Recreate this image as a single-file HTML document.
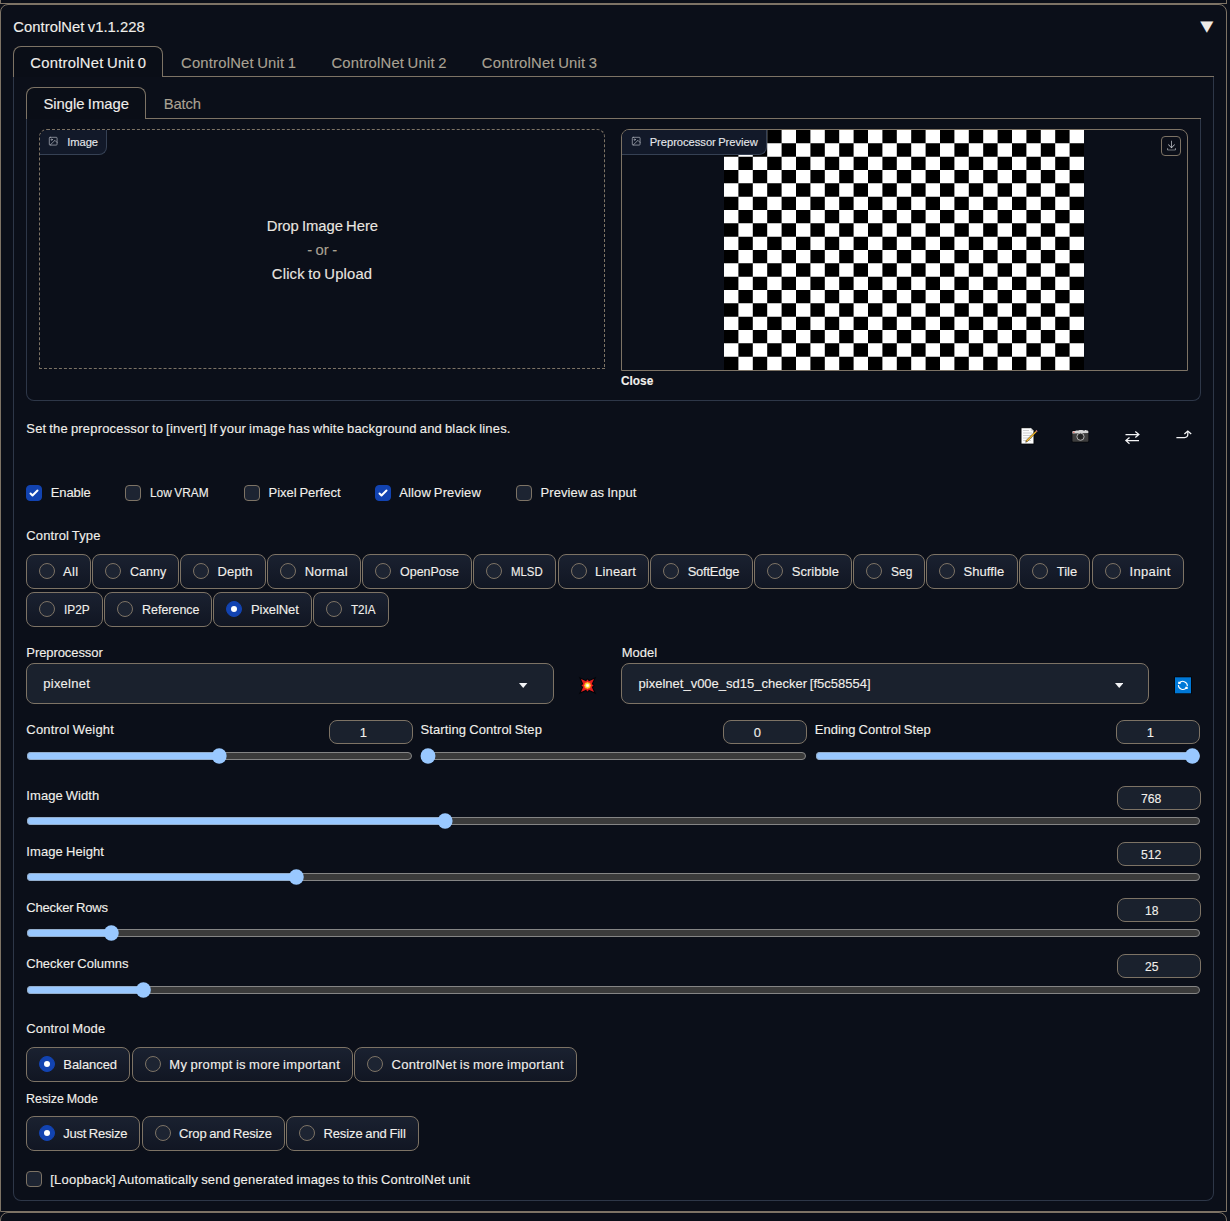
<!DOCTYPE html>
<html lang="en"><head><meta charset="utf-8"><title>ControlNet v1.1.228</title>
<style>
html,body{margin:0;padding:0}
body{width:1230px;height:1221px;overflow:hidden;background:#0b0f19;position:relative;font-family:"Liberation Sans", sans-serif;color:#f1efeb}
div,span,svg{box-sizing:border-box;position:absolute}
.blk{border:1px solid #7d7365;background:#0b0f19}
.tabitem{border:1px solid #2e3748;border-top:none;border-radius:0 0 8px 8px}
.navline{height:1px;background:#7d7365}
.tabsel{border:1px solid #7d7365;border-bottom:none;border-radius:8px 8px 0 0;background:#0a0e17}
.imgblk{border:1px solid #7d7365;border-radius:8px 8px 0 0}
.dashed{border-style:dashed}
.lbl{background:#121929;border-right:1px solid #364154;border-bottom:1px solid #364154;border-radius:7px 0 8px 0}
.dlbtn{width:20px;height:20px;border:1px solid #7d7365;border-radius:4px;background:#0b0f19}
.dlbtn svg{left:3.5px;top:3.2px}
.t{white-space:pre;line-height:20px;height:20px;word-spacing:-0.06em;-webkit-text-stroke:0.12px;transform-origin:0 50%}
.tri{font-family:"DejaVu Sans",sans-serif;font-size:17px;line-height:20px;color:#edebe8;transform:scaleY(0.86);transform-origin:50% 50%}
.cb{width:16px;height:16px;border:1px solid #7d7365;border-radius:4px;background:#1d2432}
.cb.on{background:#1243b1;border-color:#1243b1}
.cb svg{left:-1px;top:-1px}
.pill{border:1px solid #7d7365;border-radius:8px;background:linear-gradient(to top,#111623,#1a2130)}
.rd{width:16px;height:16px;border:1px solid #7d7365;border-radius:50%;background:#1d2432}
.rd.on{background:#1243b1;border-color:#1243b1}
.rd i{position:absolute;left:4px;top:4px;width:6px;height:6px;border-radius:50%;background:#fff}
.dd{border:1px solid #7d7365;border-radius:8px;background:#1a212d}
.num{height:24px;border:1px solid #7d7365;border-radius:8px;background:#1a212d}
.trk{height:8px;border:1px solid #858585;border-radius:4px;background:#3b3b3b}
.fil{height:8px;border-radius:4px 0 0 4px;background:#99c8ff;box-shadow:inset 0 0 0 1px rgba(138,132,124,.38)}
</style></head>
<body>
<div class="blk" style="left:0;top:-20px;width:1227px;height:24px;border-radius:0"></div>
<div class="blk" style="left:0;top:4px;width:1227px;height:1208px;border-radius:8px 8px 0 0"></div>
<div class="blk" style="left:0;top:1212px;width:1227px;height:40px;border-radius:8px 8px 0 0"></div>
<span class="t" id="t0" style="left:13.30px;top:16.87px;font-size:14.8px;color:#f1efeb;letter-spacing:0.041px">ControlNet v1.1.228</span>
<span class="tri" style="left:1200.2px;top:16.4px">▼</span>
<div class="tabitem" style="left:13px;top:76px;width:1201px;height:1125px"></div>
<div class="navline" style="left:13px;top:76px;width:1201px"></div>
<div class="tabsel" style="left:13px;top:46px;width:150px;height:31px"></div>
<span class="t" id="t1" style="left:30.30px;top:52.87px;font-size:14.8px;color:#f1efeb;letter-spacing:0.252px">ControlNet Unit 0</span>
<span class="t" id="t2" style="left:181.00px;top:52.87px;font-size:14.8px;color:#aaa293;letter-spacing:0.205px">ControlNet Unit 1</span>
<span class="t" id="t3" style="left:331.40px;top:52.87px;font-size:14.8px;color:#aaa293;letter-spacing:0.205px">ControlNet Unit 2</span>
<span class="t" id="t4" style="left:481.80px;top:52.87px;font-size:14.8px;color:#aaa293;letter-spacing:0.217px">ControlNet Unit 3</span>
<div class="tabitem" style="left:26px;top:118px;width:1175px;height:283px"></div>
<div class="navline" style="left:26px;top:118px;width:1175px"></div>
<div class="tabsel" style="left:26px;top:87px;width:120px;height:32px"></div>
<span class="t" id="t5" style="left:43.40px;top:93.87px;font-size:14.8px;color:#f1efeb;letter-spacing:0.010px">Single Image</span>
<span class="t" id="t6" style="left:163.80px;top:93.87px;font-size:14.8px;color:#aaa293;letter-spacing:-0.169px">Batch</span>
<div class="imgblk dashed" style="left:39px;top:129px;width:566px;height:240px"></div>
<div class="lbl" style="left:40px;top:130px;width:67px;height:25px"></div>
<svg class="ico" style="left:48px;top:136px" width="10.4" height="10.4" viewBox="0 0 24 24" fill="none" stroke="#b4b8c0" stroke-width="1.600" stroke-linecap="round" stroke-linejoin="round"><rect x="3" y="3" width="18" height="18" rx="2" ry="2"/><circle cx="8.5" cy="8.5" r="1.5"/><polyline points="21 15 16 10 5 21"/></svg>
<span class="t" id="t7" style="left:67.20px;top:132.12px;font-size:11.2px;color:#e5e7eb;letter-spacing:-0.059px">Image</span>
<span class="t" id="t8" style="left:266.80px;top:215.87px;font-size:14.8px;color:#e9e6e0;letter-spacing:-0.035px">Drop Image Here</span>
<span class="t" id="t9" style="left:307.20px;top:239.87px;font-size:14.8px;color:#aaa293;letter-spacing:0.089px">- or -</span>
<span class="t" id="t10" style="left:271.80px;top:263.87px;font-size:14.8px;color:#e9e6e0;letter-spacing:0.183px">Click to Upload</span>
<div class="imgblk" style="left:621px;top:129px;width:567px;height:242px"></div>
<svg class="ico" style="left:724px;top:130px" width="360" height="240" viewBox="0 0 360 240"><rect width="360" height="240" fill="#fff"/><path d="M14.40 0.00h14.40v13.33h-14.40zM43.20 0.00h14.40v13.33h-14.40zM72.00 0.00h14.40v13.33h-14.40zM100.80 0.00h14.40v13.33h-14.40zM129.60 0.00h14.40v13.33h-14.40zM158.40 0.00h14.40v13.33h-14.40zM187.20 0.00h14.40v13.33h-14.40zM216.00 0.00h14.40v13.33h-14.40zM244.80 0.00h14.40v13.33h-14.40zM273.60 0.00h14.40v13.33h-14.40zM302.40 0.00h14.40v13.33h-14.40zM331.20 0.00h14.40v13.33h-14.40zM0.00 13.33h14.40v13.33h-14.40zM28.80 13.33h14.40v13.33h-14.40zM57.60 13.33h14.40v13.33h-14.40zM86.40 13.33h14.40v13.33h-14.40zM115.20 13.33h14.40v13.33h-14.40zM144.00 13.33h14.40v13.33h-14.40zM172.80 13.33h14.40v13.33h-14.40zM201.60 13.33h14.40v13.33h-14.40zM230.40 13.33h14.40v13.33h-14.40zM259.20 13.33h14.40v13.33h-14.40zM288.00 13.33h14.40v13.33h-14.40zM316.80 13.33h14.40v13.33h-14.40zM345.60 13.33h14.40v13.33h-14.40zM14.40 26.67h14.40v13.33h-14.40zM43.20 26.67h14.40v13.33h-14.40zM72.00 26.67h14.40v13.33h-14.40zM100.80 26.67h14.40v13.33h-14.40zM129.60 26.67h14.40v13.33h-14.40zM158.40 26.67h14.40v13.33h-14.40zM187.20 26.67h14.40v13.33h-14.40zM216.00 26.67h14.40v13.33h-14.40zM244.80 26.67h14.40v13.33h-14.40zM273.60 26.67h14.40v13.33h-14.40zM302.40 26.67h14.40v13.33h-14.40zM331.20 26.67h14.40v13.33h-14.40zM0.00 40.00h14.40v13.33h-14.40zM28.80 40.00h14.40v13.33h-14.40zM57.60 40.00h14.40v13.33h-14.40zM86.40 40.00h14.40v13.33h-14.40zM115.20 40.00h14.40v13.33h-14.40zM144.00 40.00h14.40v13.33h-14.40zM172.80 40.00h14.40v13.33h-14.40zM201.60 40.00h14.40v13.33h-14.40zM230.40 40.00h14.40v13.33h-14.40zM259.20 40.00h14.40v13.33h-14.40zM288.00 40.00h14.40v13.33h-14.40zM316.80 40.00h14.40v13.33h-14.40zM345.60 40.00h14.40v13.33h-14.40zM14.40 53.33h14.40v13.33h-14.40zM43.20 53.33h14.40v13.33h-14.40zM72.00 53.33h14.40v13.33h-14.40zM100.80 53.33h14.40v13.33h-14.40zM129.60 53.33h14.40v13.33h-14.40zM158.40 53.33h14.40v13.33h-14.40zM187.20 53.33h14.40v13.33h-14.40zM216.00 53.33h14.40v13.33h-14.40zM244.80 53.33h14.40v13.33h-14.40zM273.60 53.33h14.40v13.33h-14.40zM302.40 53.33h14.40v13.33h-14.40zM331.20 53.33h14.40v13.33h-14.40zM0.00 66.67h14.40v13.33h-14.40zM28.80 66.67h14.40v13.33h-14.40zM57.60 66.67h14.40v13.33h-14.40zM86.40 66.67h14.40v13.33h-14.40zM115.20 66.67h14.40v13.33h-14.40zM144.00 66.67h14.40v13.33h-14.40zM172.80 66.67h14.40v13.33h-14.40zM201.60 66.67h14.40v13.33h-14.40zM230.40 66.67h14.40v13.33h-14.40zM259.20 66.67h14.40v13.33h-14.40zM288.00 66.67h14.40v13.33h-14.40zM316.80 66.67h14.40v13.33h-14.40zM345.60 66.67h14.40v13.33h-14.40zM14.40 80.00h14.40v13.33h-14.40zM43.20 80.00h14.40v13.33h-14.40zM72.00 80.00h14.40v13.33h-14.40zM100.80 80.00h14.40v13.33h-14.40zM129.60 80.00h14.40v13.33h-14.40zM158.40 80.00h14.40v13.33h-14.40zM187.20 80.00h14.40v13.33h-14.40zM216.00 80.00h14.40v13.33h-14.40zM244.80 80.00h14.40v13.33h-14.40zM273.60 80.00h14.40v13.33h-14.40zM302.40 80.00h14.40v13.33h-14.40zM331.20 80.00h14.40v13.33h-14.40zM0.00 93.33h14.40v13.33h-14.40zM28.80 93.33h14.40v13.33h-14.40zM57.60 93.33h14.40v13.33h-14.40zM86.40 93.33h14.40v13.33h-14.40zM115.20 93.33h14.40v13.33h-14.40zM144.00 93.33h14.40v13.33h-14.40zM172.80 93.33h14.40v13.33h-14.40zM201.60 93.33h14.40v13.33h-14.40zM230.40 93.33h14.40v13.33h-14.40zM259.20 93.33h14.40v13.33h-14.40zM288.00 93.33h14.40v13.33h-14.40zM316.80 93.33h14.40v13.33h-14.40zM345.60 93.33h14.40v13.33h-14.40zM14.40 106.67h14.40v13.33h-14.40zM43.20 106.67h14.40v13.33h-14.40zM72.00 106.67h14.40v13.33h-14.40zM100.80 106.67h14.40v13.33h-14.40zM129.60 106.67h14.40v13.33h-14.40zM158.40 106.67h14.40v13.33h-14.40zM187.20 106.67h14.40v13.33h-14.40zM216.00 106.67h14.40v13.33h-14.40zM244.80 106.67h14.40v13.33h-14.40zM273.60 106.67h14.40v13.33h-14.40zM302.40 106.67h14.40v13.33h-14.40zM331.20 106.67h14.40v13.33h-14.40zM0.00 120.00h14.40v13.33h-14.40zM28.80 120.00h14.40v13.33h-14.40zM57.60 120.00h14.40v13.33h-14.40zM86.40 120.00h14.40v13.33h-14.40zM115.20 120.00h14.40v13.33h-14.40zM144.00 120.00h14.40v13.33h-14.40zM172.80 120.00h14.40v13.33h-14.40zM201.60 120.00h14.40v13.33h-14.40zM230.40 120.00h14.40v13.33h-14.40zM259.20 120.00h14.40v13.33h-14.40zM288.00 120.00h14.40v13.33h-14.40zM316.80 120.00h14.40v13.33h-14.40zM345.60 120.00h14.40v13.33h-14.40zM14.40 133.33h14.40v13.33h-14.40zM43.20 133.33h14.40v13.33h-14.40zM72.00 133.33h14.40v13.33h-14.40zM100.80 133.33h14.40v13.33h-14.40zM129.60 133.33h14.40v13.33h-14.40zM158.40 133.33h14.40v13.33h-14.40zM187.20 133.33h14.40v13.33h-14.40zM216.00 133.33h14.40v13.33h-14.40zM244.80 133.33h14.40v13.33h-14.40zM273.60 133.33h14.40v13.33h-14.40zM302.40 133.33h14.40v13.33h-14.40zM331.20 133.33h14.40v13.33h-14.40zM0.00 146.67h14.40v13.33h-14.40zM28.80 146.67h14.40v13.33h-14.40zM57.60 146.67h14.40v13.33h-14.40zM86.40 146.67h14.40v13.33h-14.40zM115.20 146.67h14.40v13.33h-14.40zM144.00 146.67h14.40v13.33h-14.40zM172.80 146.67h14.40v13.33h-14.40zM201.60 146.67h14.40v13.33h-14.40zM230.40 146.67h14.40v13.33h-14.40zM259.20 146.67h14.40v13.33h-14.40zM288.00 146.67h14.40v13.33h-14.40zM316.80 146.67h14.40v13.33h-14.40zM345.60 146.67h14.40v13.33h-14.40zM14.40 160.00h14.40v13.33h-14.40zM43.20 160.00h14.40v13.33h-14.40zM72.00 160.00h14.40v13.33h-14.40zM100.80 160.00h14.40v13.33h-14.40zM129.60 160.00h14.40v13.33h-14.40zM158.40 160.00h14.40v13.33h-14.40zM187.20 160.00h14.40v13.33h-14.40zM216.00 160.00h14.40v13.33h-14.40zM244.80 160.00h14.40v13.33h-14.40zM273.60 160.00h14.40v13.33h-14.40zM302.40 160.00h14.40v13.33h-14.40zM331.20 160.00h14.40v13.33h-14.40zM0.00 173.33h14.40v13.33h-14.40zM28.80 173.33h14.40v13.33h-14.40zM57.60 173.33h14.40v13.33h-14.40zM86.40 173.33h14.40v13.33h-14.40zM115.20 173.33h14.40v13.33h-14.40zM144.00 173.33h14.40v13.33h-14.40zM172.80 173.33h14.40v13.33h-14.40zM201.60 173.33h14.40v13.33h-14.40zM230.40 173.33h14.40v13.33h-14.40zM259.20 173.33h14.40v13.33h-14.40zM288.00 173.33h14.40v13.33h-14.40zM316.80 173.33h14.40v13.33h-14.40zM345.60 173.33h14.40v13.33h-14.40zM14.40 186.67h14.40v13.33h-14.40zM43.20 186.67h14.40v13.33h-14.40zM72.00 186.67h14.40v13.33h-14.40zM100.80 186.67h14.40v13.33h-14.40zM129.60 186.67h14.40v13.33h-14.40zM158.40 186.67h14.40v13.33h-14.40zM187.20 186.67h14.40v13.33h-14.40zM216.00 186.67h14.40v13.33h-14.40zM244.80 186.67h14.40v13.33h-14.40zM273.60 186.67h14.40v13.33h-14.40zM302.40 186.67h14.40v13.33h-14.40zM331.20 186.67h14.40v13.33h-14.40zM0.00 200.00h14.40v13.33h-14.40zM28.80 200.00h14.40v13.33h-14.40zM57.60 200.00h14.40v13.33h-14.40zM86.40 200.00h14.40v13.33h-14.40zM115.20 200.00h14.40v13.33h-14.40zM144.00 200.00h14.40v13.33h-14.40zM172.80 200.00h14.40v13.33h-14.40zM201.60 200.00h14.40v13.33h-14.40zM230.40 200.00h14.40v13.33h-14.40zM259.20 200.00h14.40v13.33h-14.40zM288.00 200.00h14.40v13.33h-14.40zM316.80 200.00h14.40v13.33h-14.40zM345.60 200.00h14.40v13.33h-14.40zM14.40 213.33h14.40v13.33h-14.40zM43.20 213.33h14.40v13.33h-14.40zM72.00 213.33h14.40v13.33h-14.40zM100.80 213.33h14.40v13.33h-14.40zM129.60 213.33h14.40v13.33h-14.40zM158.40 213.33h14.40v13.33h-14.40zM187.20 213.33h14.40v13.33h-14.40zM216.00 213.33h14.40v13.33h-14.40zM244.80 213.33h14.40v13.33h-14.40zM273.60 213.33h14.40v13.33h-14.40zM302.40 213.33h14.40v13.33h-14.40zM331.20 213.33h14.40v13.33h-14.40zM0.00 226.67h14.40v13.33h-14.40zM28.80 226.67h14.40v13.33h-14.40zM57.60 226.67h14.40v13.33h-14.40zM86.40 226.67h14.40v13.33h-14.40zM115.20 226.67h14.40v13.33h-14.40zM144.00 226.67h14.40v13.33h-14.40zM172.80 226.67h14.40v13.33h-14.40zM201.60 226.67h14.40v13.33h-14.40zM230.40 226.67h14.40v13.33h-14.40zM259.20 226.67h14.40v13.33h-14.40zM288.00 226.67h14.40v13.33h-14.40zM316.80 226.67h14.40v13.33h-14.40zM345.60 226.67h14.40v13.33h-14.40z" fill="#000"/></svg>
<div class="lbl" style="left:622px;top:130px;width:144.5px;height:25px"></div>
<svg class="ico" style="left:630.5px;top:136px" width="10.4" height="10.4" viewBox="0 0 24 24" fill="none" stroke="#b4b8c0" stroke-width="1.600" stroke-linecap="round" stroke-linejoin="round"><rect x="3" y="3" width="18" height="18" rx="2" ry="2"/><circle cx="8.5" cy="8.5" r="1.5"/><polyline points="21 15 16 10 5 21"/></svg>
<span class="t" id="t11" style="left:649.70px;top:132.12px;font-size:11.2px;color:#e5e7eb;letter-spacing:-0.038px">Preprocessor Preview</span>
<div class="dlbtn" style="left:1161px;top:136px"><svg width="11" height="11" viewBox="0 0 32 32" fill="#cfd2d8"><path d="M26 24v4H6v-4H4v4a2 2 0 0 0 2 2h20a2 2 0 0 0 2-2v-4zm0-10l-1.410-1.410L17 20.170V2h-2v18.170l-7.590-7.580L6 14l10 10l10-10z"/></svg></div>
<span class="t" id="t12" style="left:621.40px;top:370.50px;font-size:13.0px;color:#f1efeb;transform:scaleX(0.9123);font-weight:700">Close</span>
<span class="t" id="t13" style="left:26.30px;top:418.50px;font-size:13.0px;color:#f1efeb;letter-spacing:0.174px">Set the preprocessor to [invert] If your image has white background and black lines.</span>
<div class="cb on" style="left:26px;top:485px"><svg width="16" height="16" viewBox="0 0 16 16" fill="#fff"><path d="M12.207 4.793a1 1 0 010 1.414l-5 5a1 1 0 01-1.414 0l-2-2a1 1 0 011.414-1.414L6.500 9.086l4.293-4.293a1 1 0 011.414 0z"/></svg></div>
<span class="t" id="t14" style="left:50.80px;top:482.50px;font-size:13.0px;color:#f1efeb;letter-spacing:-0.114px">Enable</span>
<div class="cb" style="left:125px;top:485px"></div>
<span class="t" id="t15" style="left:150.30px;top:482.50px;font-size:13.0px;color:#f1efeb;transform:scaleX(0.9136)">Low VRAM</span>
<div class="cb" style="left:244px;top:485px"></div>
<span class="t" id="t16" style="left:268.50px;top:482.50px;font-size:13.0px;color:#f1efeb;letter-spacing:-0.016px">Pixel Perfect</span>
<div class="cb on" style="left:375px;top:485px"><svg width="16" height="16" viewBox="0 0 16 16" fill="#fff"><path d="M12.207 4.793a1 1 0 010 1.414l-5 5a1 1 0 01-1.414 0l-2-2a1 1 0 011.414-1.414L6.500 9.086l4.293-4.293a1 1 0 011.414 0z"/></svg></div>
<span class="t" id="t17" style="left:399.20px;top:482.50px;font-size:13.0px;color:#f1efeb;letter-spacing:0.128px">Allow Preview</span>
<div class="cb" style="left:516px;top:485px"></div>
<span class="t" id="t18" style="left:540.50px;top:482.50px;font-size:13.0px;color:#f1efeb;letter-spacing:0.091px">Preview as Input</span>
<span class="t" id="t19" style="left:26.30px;top:525.50px;font-size:13.0px;color:#f1efeb;letter-spacing:0.133px">Control Type</span>
<div class="pill" style="left:26px;top:554px;width:65px;height:35px"></div>
<div class="rd" style="left:39px;top:563px"></div>
<span class="t" id="t20" style="left:62.90px;top:561.50px;font-size:13.0px;color:#f1efeb;letter-spacing:0.382px">All</span>
<div class="pill" style="left:92px;top:554px;width:87px;height:35px"></div>
<div class="rd" style="left:105px;top:563px"></div>
<span class="t" id="t21" style="left:129.60px;top:561.50px;font-size:13.0px;color:#f1efeb;transform:scaleX(0.9633)">Canny</span>
<div class="pill" style="left:180px;top:554px;width:86px;height:35px"></div>
<div class="rd" style="left:193px;top:563px"></div>
<span class="t" id="t22" style="left:217.40px;top:561.50px;font-size:13.0px;color:#f1efeb;letter-spacing:0.099px">Depth</span>
<div class="pill" style="left:267px;top:554px;width:94px;height:35px"></div>
<div class="rd" style="left:280px;top:563px"></div>
<span class="t" id="t23" style="left:304.80px;top:561.50px;font-size:13.0px;color:#f1efeb;letter-spacing:0.182px">Normal</span>
<div class="pill" style="left:362px;top:554px;width:110px;height:35px"></div>
<div class="rd" style="left:375px;top:563px"></div>
<span class="t" id="t24" style="left:400.00px;top:561.50px;font-size:13.0px;color:#f1efeb;transform:scaleX(0.9603)">OpenPose</span>
<div class="pill" style="left:473px;top:554px;width:83px;height:35px"></div>
<div class="rd" style="left:486px;top:563px"></div>
<span class="t" id="t25" style="left:511.00px;top:561.50px;font-size:13.0px;color:#f1efeb;transform:scaleX(0.8775)">MLSD</span>
<div class="pill" style="left:558px;top:554px;width:91px;height:35px"></div>
<div class="rd" style="left:571px;top:563px"></div>
<span class="t" id="t26" style="left:595.00px;top:561.50px;font-size:13.0px;color:#f1efeb;letter-spacing:0.179px">Lineart</span>
<div class="pill" style="left:650px;top:554px;width:103px;height:35px"></div>
<div class="rd" style="left:663px;top:563px"></div>
<span class="t" id="t27" style="left:687.70px;top:561.50px;font-size:13.0px;color:#f1efeb;letter-spacing:-0.237px">SoftEdge</span>
<div class="pill" style="left:754px;top:554px;width:98px;height:35px"></div>
<div class="rd" style="left:767px;top:563px"></div>
<span class="t" id="t28" style="left:791.70px;top:561.50px;font-size:13.0px;color:#f1efeb;letter-spacing:0.041px">Scribble</span>
<div class="pill" style="left:853px;top:554px;width:72px;height:35px"></div>
<div class="rd" style="left:866px;top:563px"></div>
<span class="t" id="t29" style="left:891.00px;top:561.50px;font-size:13.0px;color:#f1efeb;transform:scaleX(0.9205)">Seg</span>
<div class="pill" style="left:926px;top:554px;width:92px;height:35px"></div>
<div class="rd" style="left:939px;top:563px"></div>
<span class="t" id="t30" style="left:963.50px;top:561.50px;font-size:13.0px;color:#f1efeb;letter-spacing:0.064px">Shuffle</span>
<div class="pill" style="left:1019px;top:554px;width:71px;height:35px"></div>
<div class="rd" style="left:1032px;top:563px"></div>
<span class="t" id="t31" style="left:1056.70px;top:561.50px;font-size:13.0px;color:#f1efeb;letter-spacing:0.008px">Tile</span>
<div class="pill" style="left:1092px;top:554px;width:92px;height:35px"></div>
<div class="rd" style="left:1105px;top:563px"></div>
<span class="t" id="t32" style="left:1129.60px;top:561.50px;font-size:13.0px;color:#f1efeb;letter-spacing:0.308px">Inpaint</span>
<div class="pill" style="left:26px;top:592px;width:77px;height:35px"></div>
<div class="rd" style="left:39px;top:601px"></div>
<span class="t" id="t33" style="left:63.60px;top:599.50px;font-size:13.0px;color:#f1efeb;transform:scaleX(0.9118)">IP2P</span>
<div class="pill" style="left:104px;top:592px;width:108px;height:35px"></div>
<div class="rd" style="left:117px;top:601px"></div>
<span class="t" id="t34" style="left:141.70px;top:599.50px;font-size:13.0px;color:#f1efeb;transform:scaleX(0.9586)">Reference</span>
<div class="pill" style="left:213px;top:592px;width:99px;height:35px"></div>
<div class="rd on" style="left:226px;top:601px"><i></i></div>
<span class="t" id="t35" style="left:251.00px;top:599.50px;font-size:13.0px;color:#f1efeb;letter-spacing:-0.090px">PixelNet</span>
<div class="pill" style="left:313px;top:592px;width:76px;height:35px"></div>
<div class="rd" style="left:326px;top:601px"></div>
<span class="t" id="t36" style="left:351.20px;top:599.50px;font-size:13.0px;color:#f1efeb;transform:scaleX(0.8956)">T2IA</span>
<span class="t" id="t37" style="left:26.30px;top:642.50px;font-size:13.0px;color:#f1efeb;letter-spacing:-0.076px">Preprocessor</span>
<div class="dd" style="left:26px;top:663px;width:528px;height:41px"></div>
<span class="t" id="t38" style="left:43.30px;top:673.50px;font-size:13.0px;color:#f1efeb;letter-spacing:0.236px">pixelnet</span>
<svg class="ico" style="left:519.3px;top:682.6px" width="8.4" height="5" viewBox="0 0 8.4 5"><path d="M0 0h8.400L4.200 4.900z" fill="#f3f4f6"/></svg>
<span class="t" id="t39" style="left:621.80px;top:642.50px;font-size:13.0px;color:#f1efeb;letter-spacing:-0.044px">Model</span>
<div class="dd" style="left:621px;top:663px;width:528px;height:41px"></div>
<span class="t" id="t40" style="left:638.60px;top:673.50px;font-size:13.0px;color:#f1efeb;letter-spacing:0.001px">pixelnet_v00e_sd15_checker [f5c58554]</span>
<svg class="ico" style="left:1114.8px;top:682.6px" width="8.4" height="5" viewBox="0 0 8.4 5"><path d="M0 0h8.400L4.200 4.900z" fill="#f3f4f6"/></svg>
<span class="t" id="t41" style="left:26.30px;top:719.50px;font-size:13.0px;color:#f1efeb;letter-spacing:0.202px">Control Weight</span>
<div class="num" style="left:329.3px;top:720px;width:83.4px"></div>
<span class="t" id="t42" style="left:359.68px;top:722.50px;font-size:13.0px;color:#f1efeb">1</span>
<div class="trk" style="left:27.3px;top:752px;width:384.4px"></div>
<div class="fil" style="left:27.3px;top:752px;width:191.89999999999998px"></div>
<svg class="ico" style="left:209px;top:746px" width="20" height="20" viewBox="0 0 20 20"><ellipse cx="10.20" cy="9.95" rx="7.45" ry="7.75" fill="#99c8ff"/></svg>
<span class="t" id="t43" style="left:420.50px;top:719.50px;font-size:13.0px;color:#f1efeb;letter-spacing:0.113px">Starting Control Step</span>
<div class="num" style="left:723.3px;top:720px;width:83.4px"></div>
<span class="t" id="t44" style="left:753.68px;top:722.50px;font-size:13.0px;color:#f1efeb">0</span>
<div class="trk" style="left:421.5px;top:752px;width:384.0px"></div>
<div class="fil" style="left:421.5px;top:752px;width:6.5px"></div>
<svg class="ico" style="left:418px;top:746px" width="20" height="20" viewBox="0 0 20 20"><ellipse cx="10.00" cy="9.95" rx="7.45" ry="7.75" fill="#99c8ff"/></svg>
<span class="t" id="t45" style="left:814.80px;top:719.50px;font-size:13.0px;color:#f1efeb;letter-spacing:0.063px">Ending Control Step</span>
<div class="num" style="left:1116.3px;top:720px;width:83.7px"></div>
<span class="t" id="t46" style="left:1146.83px;top:722.50px;font-size:13.0px;color:#f1efeb">1</span>
<div class="trk" style="left:815.5px;top:752px;width:384.20000000000005px"></div>
<div class="fil" style="left:815.5px;top:752px;width:376.79999999999995px"></div>
<svg class="ico" style="left:1182px;top:746px" width="20" height="20" viewBox="0 0 20 20"><ellipse cx="10.30" cy="9.95" rx="7.45" ry="7.75" fill="#99c8ff"/></svg>
<span class="t" id="t47" style="left:26.30px;top:785.50px;font-size:13.0px;color:#f1efeb;letter-spacing:0.072px">Image Width</span>
<div class="num" style="left:1117px;top:786px;width:84px"></div>
<span class="t" id="t48" style="left:1141.10px;top:788.50px;font-size:13.0px;color:#f1efeb;transform:scaleX(0.9400)">768</span>
<div class="trk" style="left:27.3px;top:817px;width:1172.4px"></div>
<div class="fil" style="left:27.3px;top:817px;width:417.8px"></div>
<svg class="ico" style="left:435px;top:811px" width="20" height="20" viewBox="0 0 20 20"><ellipse cx="10.10" cy="9.95" rx="7.45" ry="7.75" fill="#99c8ff"/></svg>
<span class="t" id="t49" style="left:26.30px;top:841.50px;font-size:13.0px;color:#f1efeb;letter-spacing:0.104px">Image Height</span>
<div class="num" style="left:1117px;top:842px;width:84px"></div>
<span class="t" id="t50" style="left:1141.10px;top:844.50px;font-size:13.0px;color:#f1efeb;transform:scaleX(0.9400)">512</span>
<div class="trk" style="left:27.3px;top:873px;width:1172.4px"></div>
<div class="fil" style="left:27.3px;top:873px;width:269.0px"></div>
<svg class="ico" style="left:286px;top:867px" width="20" height="20" viewBox="0 0 20 20"><ellipse cx="10.30" cy="9.95" rx="7.45" ry="7.75" fill="#99c8ff"/></svg>
<span class="t" id="t51" style="left:26.30px;top:897.50px;font-size:13.0px;color:#f1efeb;letter-spacing:-0.179px">Checker Rows</span>
<div class="num" style="left:1117px;top:898px;width:84px"></div>
<span class="t" id="t52" style="left:1144.55px;top:900.50px;font-size:13.0px;color:#f1efeb;transform:scaleX(0.9330)">18</span>
<div class="trk" style="left:27.3px;top:929px;width:1172.4px"></div>
<div class="fil" style="left:27.3px;top:929px;width:84.0px"></div>
<svg class="ico" style="left:101px;top:923px" width="20" height="20" viewBox="0 0 20 20"><ellipse cx="10.30" cy="9.95" rx="7.45" ry="7.75" fill="#99c8ff"/></svg>
<span class="t" id="t53" style="left:26.30px;top:953.50px;font-size:13.0px;color:#f1efeb;letter-spacing:-0.023px">Checker Columns</span>
<div class="num" style="left:1117px;top:954px;width:84px"></div>
<span class="t" id="t54" style="left:1144.55px;top:956.50px;font-size:13.0px;color:#f1efeb;transform:scaleX(0.9330)">25</span>
<div class="trk" style="left:27.3px;top:986px;width:1172.4px"></div>
<div class="fil" style="left:27.3px;top:986px;width:116.10000000000001px"></div>
<svg class="ico" style="left:133px;top:980px" width="20" height="20" viewBox="0 0 20 20"><ellipse cx="10.40" cy="9.95" rx="7.45" ry="7.75" fill="#99c8ff"/></svg>
<span class="t" id="t55" style="left:26.30px;top:1018.50px;font-size:13.0px;color:#f1efeb;letter-spacing:0.145px">Control Mode</span>
<div class="pill" style="left:26px;top:1047px;width:104px;height:35px"></div>
<div class="rd on" style="left:39px;top:1056px"><i></i></div>
<span class="t" id="t56" style="left:63.30px;top:1054.50px;font-size:13.0px;color:#f1efeb;letter-spacing:-0.065px">Balanced</span>
<div class="pill" style="left:132px;top:1047px;width:221px;height:35px"></div>
<div class="rd" style="left:145px;top:1056px"></div>
<span class="t" id="t57" style="left:169.30px;top:1054.50px;font-size:13.0px;color:#f1efeb;letter-spacing:0.314px">My prompt is more important</span>
<div class="pill" style="left:354px;top:1047px;width:223px;height:35px"></div>
<div class="rd" style="left:367px;top:1056px"></div>
<span class="t" id="t58" style="left:391.50px;top:1054.50px;font-size:13.0px;color:#f1efeb;letter-spacing:0.306px">ControlNet is more important</span>
<span class="t" id="t59" style="left:26.30px;top:1088.50px;font-size:13.0px;color:#f1efeb;transform:scaleX(0.9561)">Resize Mode</span>
<div class="pill" style="left:26px;top:1116px;width:114px;height:35px"></div>
<div class="rd on" style="left:39px;top:1125px"><i></i></div>
<span class="t" id="t60" style="left:63.20px;top:1123.50px;font-size:13.0px;color:#f1efeb;letter-spacing:-0.220px">Just Resize</span>
<div class="pill" style="left:142px;top:1116px;width:143px;height:35px"></div>
<div class="rd" style="left:155px;top:1125px"></div>
<span class="t" id="t61" style="left:179.00px;top:1123.50px;font-size:13.0px;color:#f1efeb;letter-spacing:-0.172px">Crop and Resize</span>
<div class="pill" style="left:286px;top:1116px;width:133px;height:35px"></div>
<div class="rd" style="left:299px;top:1125px"></div>
<span class="t" id="t62" style="left:323.40px;top:1123.50px;font-size:13.0px;color:#f1efeb;letter-spacing:-0.094px">Resize and Fill</span>
<div class="cb" style="left:26px;top:1171px"></div>
<span class="t" id="t63" style="left:50.30px;top:1169.50px;font-size:13.0px;color:#f1efeb;letter-spacing:0.200px">[Loopback] Automatically send generated images to this ControlNet unit</span>
<svg class="ico" style="left:1018px;top:425px" width="22" height="22" viewBox="0 0 22 22"><path d="M3 2.700h9.800l3.200 3.200v13.200H3z" fill="#fdfdfd" stroke="#04060b" stroke-width="1"/><path d="M12.800 2.700v3.200h3.200" fill="#d9d9d9"/><path d="M5 5.500h6M5 8h9M5 10.500h9M5 13h9M5 15.500h8" stroke="#c9c9c9" stroke-width="0.900"/><path d="M7.700 17.200l0.600-1.900 9.300-9.400 1.200 1.200-9.300 9.400z" fill="#f6b928" stroke="#04060b" stroke-width="0.400"/><path d="M17.600 5.900l0.800-0.800 1.200 1.200-0.800 0.800z" fill="#e98b8b"/><path d="M7.700 17.200l0.300-0.950 0.650 0.650z" fill="#3a3a3a"/></svg>
<svg class="ico" style="left:1070px;top:427px" width="22" height="18" viewBox="0 0 22 18"><rect x="1.700" y="3.200" width="17.400" height="12.300" rx="1.200" fill="#04060b"/><rect x="2.400" y="4.000" width="16" height="10.800" rx="0.800" fill="#3e3e3e"/><path d="M2.400 6.600V4.800q0-.8.800-.8h2.200l.5-.6h2.400l1.200-.4h2.800l1.200.4h1.200l.5-.5h.9l.5.500h.9q.8 0 .8.800v1.800z" fill="#d4d4d4"/><circle cx="10.500" cy="9.700" r="3.600" fill="#2b2b2b" stroke="#b9b9b9" stroke-width="0.900"/><circle cx="10.500" cy="9.700" r="1.900" fill="#222"/><rect x="3.300" y="4.700" width="1.100" height="1.200" fill="#e8403a"/></svg>
<svg class="ico" style="left:1124px;top:430px" width="18" height="16" viewBox="0 0 18 16" fill="none" stroke="#f4f4f6" stroke-width="1.250"><path d="M1.500 4.600h13.600M11.300 1.600l3.600 3-3.600 3"/><path d="M15 10.600H1.700M5.500 7.500l-3.600 3.100 3.600 3.100"/></svg>
<svg class="ico" style="left:1175px;top:428px" width="18" height="14" viewBox="0 0 18 14" fill="none" stroke="#f4f4f6" stroke-width="1.250"><path d="M1.400 9.500h8.200q3.200 0 3.200-3.200V3.600"/><path d="M9.400 6.100l3.400-3 3.400 3" stroke-width="1.350"/></svg>
<svg class="ico" style="left:577px;top:675px" width="21" height="21" viewBox="-10.500 -10.500 21 21"><defs><radialGradient id="bm" cx="0" cy="0" r="4.200" gradientUnits="userSpaceOnUse"><stop offset="0" stop-color="#fff"/><stop offset="0.280" stop-color="#fff6cf"/><stop offset="0.500" stop-color="#ffd23a"/><stop offset="0.850" stop-color="#fb8a1e"/><stop offset="1" stop-color="#f4501c"/></radialGradient></defs><path d="M0-7.200L1.700-5.400 8.800-8.700 5.400-1.700 7.300 0 5.400 1.700 8.800 8.700 1.700 5.400 0 7.200-1.700 5.400-8.800 8.700-5.400 1.700-7.300 0-5.400-1.700-8.800-8.700-1.700-5.400z" fill="#03050a"/><path d="M0-5.900L1.500-4.300 3.100-5 6.500-6.500 4.900-3.100 4.300-1.500 6 0 4.300 1.500 4.900 3.100 6.500 6.500 3.100 4.900 1.500 4.300 0 5.900-1.500 4.300-3.100 4.900-6.500 6.500-4.900 3.100-4.300 1.500-6 0-4.300-1.500-4.900-3.100-6.500-6.500-3.100-5-1.500-4.300z" fill="#e81d1d"/><path d="M0-4L1-3 2.800-2.800 3-1 4 0 3 1 2.800 2.800 1 3 0 4-1 3-2.800 2.800-3 1-4 0-3-1-2.800-2.800-1-3z" fill="url(#bm)"/></svg>
<svg class="ico" style="left:1173px;top:675px" width="20" height="20" viewBox="0 0 20 20"><rect x="1.200" y="1.500" width="17.600" height="17.600" rx="0.600" fill="#03050a"/><rect x="2" y="2.300" width="16" height="16" fill="#0078d7"/><g fill="none" stroke="#fff" stroke-width="1.050"><path d="M6.300 8.200A4.500 4.500 0 0 1 14.400 10.900"/><path d="M13.500 12.600A4.500 4.500 0 0 1 5.400 9.900"/></g><path d="M5.200 6.700l2.400 0.100-0.100 2.300-2.300 0z" fill="#fff"/><path d="M14.700 14.100l-2.400-0.100 0.100-2.300 2.300 0z" fill="#fff"/></svg>

</body></html>
